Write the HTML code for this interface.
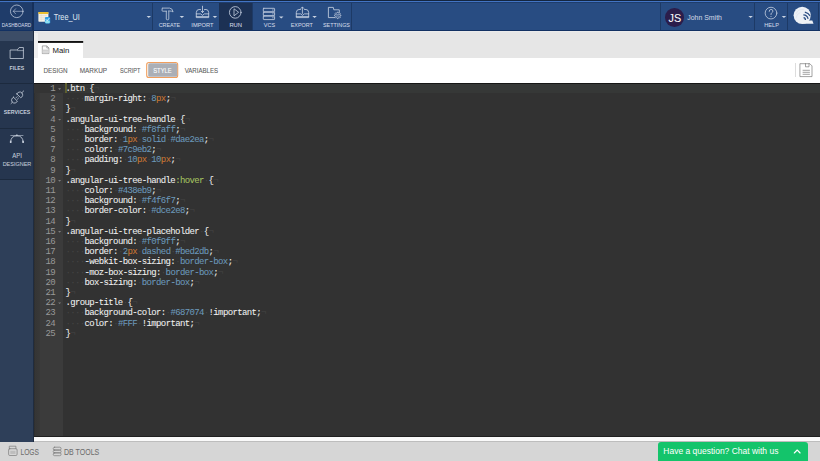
<!DOCTYPE html>
<html><head><meta charset="utf-8">
<style>
*{box-sizing:border-box}
html,body{margin:0;padding:0}
body{width:820px;height:461px;overflow:hidden;position:relative;background:#d6d6d6;font-family:"Liberation Sans",sans-serif}
.a{position:absolute}
.gn{position:absolute;right:0;width:30px;text-align:right;white-space:pre;color:#999999;font-family:"Liberation Mono",monospace;font-size:9px;line-height:10.25px;height:10.25px;letter-spacing:-0.63px}
.ln{position:absolute;left:0;white-space:pre;font-family:"Liberation Mono",monospace;font-size:9px;line-height:10.25px;height:10.25px;color:#e6e6e6;letter-spacing:-0.63px;-webkit-text-stroke:0.05px}
.w{color:#f0f0f0}
.n{color:#6c99bb}
.u{color:#cc7833}
.h{color:#6c99bb}
.p{color:#a5c261}
.iv{color:#454545}
</style></head>
<body>
<!-- TOP BAR backgrounds -->
<div class="a" style="left:0;top:0;width:820px;height:30.6px;background:#284c82"></div>
<div class="a" style="left:0;top:0;width:32.3px;height:30.6px;background:#1f3c6a"></div>
<div class="a" style="left:218.8px;top:0;width:33.2px;height:30.6px;background:#1c3154"></div>
<div class="a" style="left:0;top:0;width:820px;height:0.8px;background:#142640"></div>
<div class="a" style="left:0;top:0.8px;width:820px;height:1.4px;background:#4274c4"></div>
<div class="a" style="left:0;top:2.2px;width:820px;height:0.6px;background:#1f3d6b"></div>
<div class="a" style="left:0;top:29.5px;width:820px;height:1.1px;background:#123163"></div>
<div class="a" style="left:32.3px;top:1.9px;width:1.3px;height:28.7px;background:#16305a"></div>
<div class="a" style="left:152.1px;top:2.6px;width:0.9px;height:27px;background:#1d3a66"></div>
<div class="a" style="left:251.7px;top:2.6px;width:0.9px;height:27px;background:#1d3a66"></div>
<div class="a" style="left:350.7px;top:2.6px;width:0.9px;height:27px;background:#1d3a66"></div>
<div class="a" style="left:660.1px;top:2.6px;width:0.9px;height:27px;background:#1d3a66"></div>
<div class="a" style="left:754px;top:2.6px;width:0.9px;height:27px;background:#1d3a66"></div>
<div class="a" style="left:787px;top:2.6px;width:0.9px;height:27px;background:#1d3a66"></div>
<div class="a" style="left:818px;top:2.6px;width:0.9px;height:27px;background:#1d3a66"></div>
<div class="a" style="left:665.3px;top:8.1px;width:18.6px;height:18.6px;border-radius:50%;background:#2b1d4b"></div>

<!-- SIDEBAR -->
<div class="a" style="left:0;top:30.6px;width:33.6px;height:411.2px;background:#2e3f59"></div>
<div class="a" style="left:0;top:30.6px;width:32.8px;height:10.4px;background:#3c4d67"></div>
<div class="a" style="left:0;top:41px;width:32.8px;height:138.5px;background:#26364f"></div>
<div class="a" style="left:0;top:83.4px;width:32.8px;height:0.9px;background:#1c2a3e"></div>
<div class="a" style="left:0;top:127.8px;width:32.8px;height:0.9px;background:#1c2a3e"></div>
<div class="a" style="left:0;top:179px;width:32.8px;height:0.9px;background:#1c2a3e"></div>
<div class="a" style="left:32.8px;top:30.6px;width:0.8px;height:411.2px;background:#1f2c40"></div>

<!-- TAB BAR -->
<div class="a" style="left:33.6px;top:30.6px;width:786.4px;height:27px;background:#e6e6e6"></div>
<div class="a" style="left:33.6px;top:30.6px;width:786.4px;height:1.8px;background:#ebebeb"></div>
<div class="a" style="left:33.6px;top:32.6px;width:4.4px;height:25px;background:#efefef"></div>
<div class="a" style="left:38px;top:41px;width:45.2px;height:16.6px;background:#fff"></div>
<svg class="a" style="left:0;top:0" width="820" height="461" viewBox="0 0 820 461"><rect x="38" y="41" width="45.2" height="1.9" fill="#111"/></svg>

<!-- TOOLBAR -->
<div class="a" style="left:33.6px;top:57.6px;width:786.4px;height:25.1px;background:#fff"></div>
<svg class="a" style="left:0;top:0" width="820" height="461" viewBox="0 0 820 461">
 <rect x="146.7" y="62.5" width="31" height="15" rx="2.3" fill="#ffffff" stroke="#f09e5c" stroke-width="1.1"/>
 <rect x="148.2" y="63.2" width="29" height="13.6" rx="1.5" fill="#abafb6"/>
</svg>
<div class="a" style="left:795.2px;top:63.2px;width:0.7px;height:14px;background:#dddddd"></div>

<!-- CODE -->
<div class="a" style="left:33.6px;top:82.7px;width:786.4px;height:354px;background:#323232;overflow:hidden">
  <div class="a" style="left:0;top:0;width:29.7px;height:354px;background:#3b3b3b"></div>
  <div class="a" style="left:0;top:0;width:6px;height:354px;background:linear-gradient(90deg,#2c2c2c 0,#353535 1.2px,#383838 6px)"></div>
  <div class="a" style="left:0;top:0.3px;width:29.7px;height:10.2px;background:#343434"></div>
  <div class="a" style="left:29.7px;top:0.3px;width:760px;height:10.2px;background:#363837"></div>
  <div class="a" style="left:0;top:0;width:790px;height:1.4px;background:#161616"></div>
  <div class="a" style="left:31.7px;top:0.5px;width:1.5px;height:9.8px;background:#5f5f2f"></div>
  <div class="a" style="left:-8.5px;top:1.4px;width:30px;height:354px">
<div class="gn" style="top:0.00px">1</div>
<div class="gn" style="top:10.20px">2</div>
<div class="gn" style="top:20.40px">3</div>
<div class="gn" style="top:30.60px">4</div>
<div class="gn" style="top:40.80px">5</div>
<div class="gn" style="top:51.00px">6</div>
<div class="gn" style="top:61.20px">7</div>
<div class="gn" style="top:71.40px">8</div>
<div class="gn" style="top:81.60px">9</div>
<div class="gn" style="top:91.80px">10</div>
<div class="gn" style="top:102.00px">11</div>
<div class="gn" style="top:112.20px">12</div>
<div class="gn" style="top:122.40px">13</div>
<div class="gn" style="top:132.60px">14</div>
<div class="gn" style="top:142.80px">15</div>
<div class="gn" style="top:153.00px">16</div>
<div class="gn" style="top:163.20px">17</div>
<div class="gn" style="top:173.40px">18</div>
<div class="gn" style="top:183.60px">19</div>
<div class="gn" style="top:193.80px">20</div>
<div class="gn" style="top:204.00px">21</div>
<div class="gn" style="top:214.20px">22</div>
<div class="gn" style="top:224.40px">23</div>
<div class="gn" style="top:234.60px">24</div>
<div class="gn" style="top:244.80px">25</div>
<svg class="a" style="left:8.5px;top:0" width="40" height="300" fill="#7d7d7d"><path d="M24.1 4.30 h3 l-1.5 1.6 Z"/><path d="M24.1 34.90 h3 l-1.5 1.6 Z"/><path d="M24.1 96.10 h3 l-1.5 1.6 Z"/><path d="M24.1 147.10 h3 l-1.5 1.6 Z"/><path d="M24.1 218.50 h3 l-1.5 1.6 Z"/></svg>
  </div>
  <div class="a" style="left:31.8px;top:1.4px">
<div class="ln" style="top:0.00px"><span class="w">.btn</span><span class="iv">·</span><span class="w">{</span><span class="iv">¬</span></div>
<div class="ln" style="top:10.20px"><span class="iv">····</span><span class="w">margin-right:</span><span class="iv">·</span><span class="n">8</span><span class="u">px</span><span class="w">;</span><span class="iv">¬</span></div>
<div class="ln" style="top:20.40px"><span class="w">}</span><span class="iv">¬</span></div>
<div class="ln" style="top:30.60px"><span class="w">.angular-ui-tree-handle</span><span class="iv">·</span><span class="w">{</span><span class="iv">¬</span></div>
<div class="ln" style="top:40.80px"><span class="iv">····</span><span class="w">background:</span><span class="iv">·</span><span class="h">#f8faff</span><span class="w">;</span><span class="iv">¬</span></div>
<div class="ln" style="top:51.00px"><span class="iv">····</span><span class="w">border:</span><span class="iv">·</span><span class="n">1</span><span class="u">px</span><span class="iv">·</span><span class="h">solid</span><span class="iv">·</span><span class="h">#dae2ea</span><span class="w">;</span><span class="iv">¬</span></div>
<div class="ln" style="top:61.20px"><span class="iv">····</span><span class="w">color:</span><span class="iv">·</span><span class="h">#7c9eb2</span><span class="w">;</span><span class="iv">¬</span></div>
<div class="ln" style="top:71.40px"><span class="iv">····</span><span class="w">padding:</span><span class="iv">·</span><span class="n">10</span><span class="u">px</span><span class="iv">·</span><span class="n">10</span><span class="u">px</span><span class="w">;</span><span class="iv">¬</span></div>
<div class="ln" style="top:81.60px"><span class="w">}</span><span class="iv">¬</span></div>
<div class="ln" style="top:91.80px"><span class="w">.angular-ui-tree-handle</span><span class="p">:hover</span><span class="iv">·</span><span class="w">{</span><span class="iv">¬</span></div>
<div class="ln" style="top:102.00px"><span class="iv">····</span><span class="w">color:</span><span class="iv">·</span><span class="h">#438eb9</span><span class="w">;</span><span class="iv">¬</span></div>
<div class="ln" style="top:112.20px"><span class="iv">····</span><span class="w">background:</span><span class="iv">·</span><span class="h">#f4f6f7</span><span class="w">;</span><span class="iv">¬</span></div>
<div class="ln" style="top:122.40px"><span class="iv">····</span><span class="w">border-color:</span><span class="iv">·</span><span class="h">#dce2e8</span><span class="w">;</span><span class="iv">¬</span></div>
<div class="ln" style="top:132.60px"><span class="w">}</span><span class="iv">¬</span></div>
<div class="ln" style="top:142.80px"><span class="w">.angular-ui-tree-placeholder</span><span class="iv">·</span><span class="w">{</span><span class="iv">¬</span></div>
<div class="ln" style="top:153.00px"><span class="iv">····</span><span class="w">background:</span><span class="iv">·</span><span class="h">#f0f9ff</span><span class="w">;</span><span class="iv">¬</span></div>
<div class="ln" style="top:163.20px"><span class="iv">····</span><span class="w">border:</span><span class="iv">·</span><span class="n">2</span><span class="u">px</span><span class="iv">·</span><span class="h">dashed</span><span class="iv">·</span><span class="h">#bed2db</span><span class="w">;</span><span class="iv">¬</span></div>
<div class="ln" style="top:173.40px"><span class="iv">····</span><span class="w">-webkit-box-sizing:</span><span class="iv">·</span><span class="h">border-box</span><span class="w">;</span><span class="iv">¬</span></div>
<div class="ln" style="top:183.60px"><span class="iv">····</span><span class="w">-moz-box-sizing:</span><span class="iv">·</span><span class="h">border-box</span><span class="w">;</span><span class="iv">¬</span></div>
<div class="ln" style="top:193.80px"><span class="iv">····</span><span class="w">box-sizing:</span><span class="iv">·</span><span class="h">border-box</span><span class="w">;</span><span class="iv">¬</span></div>
<div class="ln" style="top:204.00px"><span class="w">}</span><span class="iv">¬</span></div>
<div class="ln" style="top:214.20px"><span class="w">.group-title</span><span class="iv">·</span><span class="w">{</span><span class="iv">¬</span></div>
<div class="ln" style="top:224.40px"><span class="iv">····</span><span class="w">background-color:</span><span class="iv">·</span><span class="h">#687074</span><span class="iv">·</span><span class="w">!important;</span><span class="iv">¬</span></div>
<div class="ln" style="top:234.60px"><span class="iv">····</span><span class="w">color:</span><span class="iv">·</span><span class="h">#FFF</span><span class="iv">·</span><span class="w">!important;</span><span class="iv">¬</span></div>
<div class="ln" style="top:244.80px"><span class="w">}</span><span class="iv">¬</span></div>
  </div>
</div>
<div class="a" style="left:33.6px;top:436.7px;width:786.4px;height:5.2px;background:#fafafa"></div>
<div class="a" style="left:33.6px;top:441.1px;width:786.4px;height:0.9px;background:#bdbdbd"></div>
<div class="a" style="left:33.6px;top:436.3px;width:786.4px;height:0.7px;background:#202020"></div>

<!-- STATUS -->
<div class="a" style="left:0;top:442px;width:820px;height:19px;background:#d6d6d6"></div>
<div class="a" style="left:657.9px;top:441.9px;width:149.9px;height:19.1px;background:#14c46b;border-radius:3px 3px 0 0"></div>

<!-- ICONS (page coordinates) -->
<svg class="a" style="left:0;top:0" width="820" height="461" viewBox="0 0 820 461" fill="none" stroke-linecap="round" stroke-linejoin="round">
 <g stroke="#c4cfe0" stroke-width="0.75">
  <!-- dashboard -->
  <circle cx="16.75" cy="11.3" r="6.3"/>
  <path d="M13.3 11.3 H22.6 M15.6 8.8 L13.3 11.3 L15.6 13.8" stroke-width="0.6"/>
  <!-- create hammer -->
  <path d="M162.6 8.1 H169.6 Q172.6 8.4 173.1 11.9 Q171.6 10.9 169.4 11 H168.8 M166.3 11.2 H162.6 Q162.1 11.2 162.1 10.7 V8.6 Q162.1 8.1 162.6 8.1" stroke-width="0.8"/>
  <path d="M166.3 11.2 V19.1 Q166.3 19.8 167.55 19.8 Q168.8 19.8 168.8 19.1 V11" stroke-width="0.8"/>
  <!-- import tray -->
  <path d="M200.5 9.5 H199 Q196.5 9.5 196.3 12.5 V17.6 H208.7 V12.5 Q208.5 9.5 206 9.5 H204.5" stroke-width="0.85"/>
  <path d="M196.3 13.9 H200.7 L202.5 15.4 L204.3 13.9 H208.7 M196.3 16.6 H208.7" stroke-width="0.85"/>
  <path d="M202.5 6.2 V12.6 M201.1 11.1 L202.5 12.6 L203.9 11.1" stroke-width="0.85"/>
  <!-- run -->
  <circle cx="235.25" cy="12.4" r="5.8" stroke-width="0.85"/>
  <path d="M234 9.2 V15.8 L238.3 12.5 Z" stroke-width="0.8"/>
  <!-- vcs -->
  <rect x="263.3" y="8.3" width="11.3" height="3.5" rx="0.5" stroke-width="0.85"/>
  <rect x="263.3" y="12.2" width="11.3" height="3.5" rx="0.5" stroke-width="0.85"/>
  <rect x="263.3" y="16.1" width="11.3" height="3.5" rx="0.5" stroke-width="0.85"/>
  <path d="M272.6 10 h0.6 M272.6 13.9 h0.6 M272.6 17.8 h0.6" stroke-width="0.8"/>
  <!-- export tray -->
  <path d="M300.5 9.5 H299 Q296.5 9.5 296.3 12.5 V17.6 H308.7 V12.5 Q308.5 9.5 306 9.5 H304.5" stroke-width="0.85"/>
  <path d="M296.3 13.9 H300.7 L302.5 15.4 L304.3 13.9 H308.7 M296.3 16.6 H308.7" stroke-width="0.85"/>
  <path d="M302.4 7.2 V13.5 M301 8.4 L302.4 7 L303.8 8.4" stroke-width="0.85"/>
  <!-- settings -->
  <path d="M334.6 17.6 H328.4 V7.4 H333.3 L333.8 9.8 H339.3 V12.3" stroke-width="0.85"/>
  <path d="M340.09 14.87 L340.97 14.97 L340.97 15.83 L340.09 15.93 L339.76 16.72 L340.32 17.41 L339.71 18.02 L339.02 17.46 L338.23 17.79 L338.13 18.67 L337.27 18.67 L337.17 17.79 L336.38 17.46 L335.69 18.02 L335.08 17.41 L335.64 16.72 L335.31 15.93 L334.43 15.83 L334.43 14.97 L335.31 14.87 L335.64 14.08 L335.08 13.39 L335.69 12.78 L336.38 13.34 L337.17 13.01 L337.27 12.13 L338.13 12.13 L338.23 13.01 L339.02 13.34 L339.71 12.78 L340.32 13.39 L339.76 14.08 Z" fill="#284c82" stroke-width="0.7"/>
  <path d="M336.5 14.7 H338.9 M336.5 16.1 H338.9" stroke-width="0.6"/>
  <!-- help -->
  <circle cx="771" cy="13.1" r="5.85" stroke-width="0.8"/>
  <path d="M769.2 11.4 Q769.2 9.4 771 9.4 Q772.9 9.4 772.9 11.1 Q772.9 12.3 771.5 13 Q771 13.3 771 14.6" stroke-width="0.8"/>
 </g>
 <circle cx="771" cy="16.5" r="0.5" fill="#c4cfe0"/>
 <!-- carets -->
 <g fill="#c9d3e2">
  <path d="M146.6 15.9 H151 L148.8 18 Z"/>
  <path d="M179.6 15.9 H184.1 L181.85 18 Z"/>
  <path d="M212.7 15.9 H217.2 L214.95 18 Z"/>
  <path d="M279 16.4 H283.5 L281.25 18.5 Z"/>
  <path d="M312.3 16 H316.8 L314.55 18.1 Z"/>
  <path d="M748.4 15.9 H752.9 L750.65 18 Z"/>
  <path d="M781.7 15.9 H786.2 L783.95 18 Z"/>
 </g>
 <!-- project icon -->
 <rect x="38.4" y="12.1" width="10" height="9.6" rx="0.7" fill="#f6f3ea"/>
 <rect x="38.4" y="12.1" width="10" height="1.8" fill="#e9b81c"/>
 <path d="M40 15.3 H46.5 M40 17.2 H46 M40 19.1 H44" stroke="#d4cbb3" stroke-width="0.5"/>
 <path d="M41.2 14.5 V20.5" stroke="#ddd5c0" stroke-width="0.4"/>
 <rect x="44.9" y="16.9" width="5.3" height="6.6" rx="1.2" fill="#2f9fe6"/>
 <rect x="45.3" y="20.5" width="4.4" height="2.8" rx="0.8" fill="#8fe0ef"/>
 <path d="M46 19.5 L47.2 20.7 L49.2 18.3" stroke="#ffffff" stroke-width="0.8"/>
 <!-- logo -->
 <circle cx="802.2" cy="15.3" r="8.6" fill="#edf1f6"/>
 <path d="M802.2 20.5 H812.3 L813.5 23.7 H802.2 Z" fill="#edf1f6"/>
 <g stroke="#284c82" fill="none" stroke-linecap="butt">
<path d="M803.58 17.63 A2.2 2.2 0 0 1 805.39 19.99" stroke-width="1.3"/>
<path d="M803.37 14.80 A5.0 5.0 0 0 1 808.09 18.76" stroke-width="1.2"/>
<path d="M804.84 12.07 A7.9 7.9 0 0 1 810.18 16.09" stroke-width="1.2"/>
 </g>
 <path d="M796.2 13.5 A6.5 6.5 0 0 1 803.5 9.5 M796 17.8 A6.5 6.5 0 0 1 800 12.6" stroke="#d2d9e4" stroke-width="0.45" fill="none"/>
 <!-- sidebar icons -->
 <g stroke="#c5cedb" stroke-width="0.8">
  <path d="M10.5 50 H17.2 L19.2 47.5 H23.4 V58.5 H10.5 Z"/>
  <path d="M17.4 50.6 H23.4" stroke-width="0.6"/>
  <!-- plug -->
  <path d="M16.87 93.91 L20.69 97.73 A3.0 3.0 0 1 0 16.87 93.91 Z"/>
  <path d="M13.51 97.27 L17.33 101.09 A3.0 3.0 0 1 1 13.51 97.27 Z"/>
  <path d="M21.82 92.78 L23.66 90.94 M12.38 102.22 L11.04 103.56"/>
  <path d="M15.9 97.9 L17.2 96.6 M17.3 99.3 L18.6 98" stroke-width="0.7"/>
  <!-- api -->
  <path d="M10.6 141.8 Q11 135.8 16.9 135.8 Q22.8 135.8 23.1 141.8" stroke-width="0.85"/>
  <path d="M10.8 135.5 H23 " stroke-width="0.6"/>
 </g>
 <g fill="#c5cedb">
  <path d="M9.9 140.8 h1.6 v2.2 h-1.6 Z M22.3 140.8 h1.6 v2.2 h-1.6 Z"/>
  <path d="M16.9 134.2 L18 135.3 L16.9 136.4 L15.8 135.3 Z"/>
 </g>

 <!-- tab doc icon -->
 <g stroke-linejoin="miter" stroke-linecap="butt">
 <path d="M42.3 45.9 H46.8 L48.9 48 V53.6 H42.3 Z" fill="#fafafa" stroke="#5e5e5e" stroke-width="0.5"/>
 <rect x="42.6" y="49.6" width="6" height="3.7" fill="#d9d9d9"/>
 <path d="M42.6 50.3 H48.6" stroke="#c4c4c4" stroke-width="0.5"/>
 <path d="M46.8 45.9 V48 H48.9" stroke="#5e5e5e" stroke-width="0.45" fill="none"/>
 </g>
 <!-- toolbar save doc icon -->
 <g stroke="#707070" stroke-width="0.65" fill="none">
  <path d="M800.3 63.7 H809.8 L812 65.9 V76.6 H800.3 Z"/>
  <path d="M805.5 63.7 V66.8 H809 V63.7"/>
  <path d="M803 70.3 H809.5 M803 72.3 H809.5 M803 74.3 H809.5"/>
 </g>
 <!-- logs icon -->
 <g stroke="#7a7a7a" stroke-width="0.7" fill="none">
  <path d="M9.3 448.7 V446.2 H15.9 V448.7"/>
  <rect x="8.6" y="448.7" width="8.5" height="6.8" rx="1.2"/>
 </g>
 <rect x="10.3" y="450.8" width="5.2" height="3.1" fill="#bdbdbd"/>
 <!-- db icon -->
 <g stroke="#7a7a7a" stroke-width="0.7" fill="none">
  <rect x="53.2" y="447.2" width="7.9" height="2.9" rx="1.45"/>
  <rect x="53.2" y="450" width="7.9" height="2.9" rx="1.45"/>
  <rect x="53.2" y="452.8" width="7.9" height="2.9" rx="1.45"/>
 </g>
 <!-- chat caret -->
 <path d="M794.3 453 L797.2 450 L800.1 453" stroke="#ffffff" stroke-width="1.1" fill="none"/>
</svg>
<svg class="a" style="left:0;top:0;pointer-events:none" width="820" height="461" viewBox="0 0 820 461">
<text x="1.72" y="26.70" font-family="Liberation Sans" font-size="5.09" fill="#d3dbe7" stroke="#d3dbe7" stroke-width="0.04" textLength="29.40" lengthAdjust="spacingAndGlyphs" xml:space="preserve">DASHBOARD</text>
<text x="158.73" y="26.80" font-family="Liberation Sans" font-size="5.52" fill="#d3dbe7" stroke="#d3dbe7" stroke-width="0.04" textLength="21.39" lengthAdjust="spacingAndGlyphs" xml:space="preserve">CREATE</text>
<text x="191.37" y="26.80" font-family="Liberation Sans" font-size="5.52" fill="#d3dbe7" stroke="#d3dbe7" stroke-width="0.04" textLength="22.16" lengthAdjust="spacingAndGlyphs" xml:space="preserve">IMPORT</text>
<text x="229.42" y="26.80" font-family="Liberation Sans" font-size="5.52" fill="#d3dbe7" stroke="#d3dbe7" stroke-width="0.04" textLength="12.66" lengthAdjust="spacingAndGlyphs" xml:space="preserve">RUN</text>
<text x="263.77" y="26.80" font-family="Liberation Sans" font-size="5.52" fill="#d3dbe7" stroke="#d3dbe7" stroke-width="0.04" textLength="11.27" lengthAdjust="spacingAndGlyphs" xml:space="preserve">VCS</text>
<text x="290.75" y="26.80" font-family="Liberation Sans" font-size="5.52" fill="#d3dbe7" stroke="#d3dbe7" stroke-width="0.04" textLength="22.18" lengthAdjust="spacingAndGlyphs" xml:space="preserve">EXPORT</text>
<text x="322.96" y="26.80" font-family="Liberation Sans" font-size="5.52" fill="#d3dbe7" stroke="#d3dbe7" stroke-width="0.04" textLength="26.99" lengthAdjust="spacingAndGlyphs" xml:space="preserve">SETTINGS</text>
<text x="764.23" y="26.80" font-family="Liberation Sans" font-size="5.52" fill="#d3dbe7" stroke="#d3dbe7" stroke-width="0.04" textLength="14.76" lengthAdjust="spacingAndGlyphs" xml:space="preserve">HELP</text>
<text x="53.74" y="19.75" font-family="Liberation Sans" font-size="8.28" fill="#dde4ee" stroke="#dde4ee" stroke-width="0.05" textLength="26.04" lengthAdjust="spacingAndGlyphs" xml:space="preserve">Tree_UI</text>
<text x="668.54" y="21.60" font-family="Liberation Sans" font-size="10.76" fill="#ffffff" stroke="#ffffff" stroke-width="0.05" textLength="12.64" lengthAdjust="spacingAndGlyphs" xml:space="preserve">JS</text>
<text x="687.30" y="19.60" font-family="Liberation Sans" font-size="6.83" fill="#d3dbe7" textLength="34.64" lengthAdjust="spacingAndGlyphs" xml:space="preserve">John Smith</text>
<text x="9.60" y="69.90" font-family="Liberation Sans" font-size="5.81" font-weight="bold" fill="#c5cedb" textLength="14.70" lengthAdjust="spacingAndGlyphs" xml:space="preserve">FILES</text>
<text x="3.74" y="113.90" font-family="Liberation Sans" font-size="5.81" font-weight="bold" fill="#c5cedb" textLength="26.56" lengthAdjust="spacingAndGlyphs" xml:space="preserve">SERVICES</text>
<text x="12.19" y="158.00" font-family="Liberation Sans" font-size="6.54" fill="#c5cedb" stroke="#c5cedb" stroke-width="0.04" textLength="9.67" lengthAdjust="spacingAndGlyphs" xml:space="preserve">API</text>
<text x="2.65" y="165.80" font-family="Liberation Sans" font-size="6.10" fill="#c5cedb" stroke="#c5cedb" stroke-width="0.04" textLength="28.62" lengthAdjust="spacingAndGlyphs" xml:space="preserve">DESIGNER</text>
<text x="52.46" y="52.60" font-family="Liberation Sans" font-size="7.41" fill="#262626" stroke="#262626" stroke-width="0.05" textLength="16.83" lengthAdjust="spacingAndGlyphs" xml:space="preserve">Main</text>
<text x="43.48" y="72.80" font-family="Liberation Sans" font-size="6.98" fill="#5c5c5c" stroke="#5c5c5c" stroke-width="0.08" textLength="24.13" lengthAdjust="spacingAndGlyphs" xml:space="preserve">DESIGN</text>
<text x="79.67" y="72.80" font-family="Liberation Sans" font-size="6.98" fill="#5c5c5c" stroke="#5c5c5c" stroke-width="0.08" textLength="27.46" lengthAdjust="spacingAndGlyphs" xml:space="preserve">MARKUP</text>
<text x="120.05" y="72.80" font-family="Liberation Sans" font-size="6.98" fill="#5c5c5c" stroke="#5c5c5c" stroke-width="0.08" textLength="20.39" lengthAdjust="spacingAndGlyphs" xml:space="preserve">SCRIPT</text>
<text x="153.24" y="72.80" font-family="Liberation Sans" font-size="6.98" fill="#ffffff" stroke="#ffffff" stroke-width="0.08" textLength="18.41" lengthAdjust="spacingAndGlyphs" xml:space="preserve">STYLE</text>
<text x="184.67" y="72.80" font-family="Liberation Sans" font-size="6.98" fill="#5c5c5c" stroke="#5c5c5c" stroke-width="0.08" textLength="33.50" lengthAdjust="spacingAndGlyphs" xml:space="preserve">VARIABLES</text>
<text x="20.45" y="454.60" font-family="Liberation Sans" font-size="8.28" fill="#6e6e6e" stroke="#6e6e6e" stroke-width="0.05" textLength="18.54" lengthAdjust="spacingAndGlyphs" xml:space="preserve">LOGS</text>
<text x="64.02" y="454.60" font-family="Liberation Sans" font-size="8.28" fill="#6e6e6e" stroke="#6e6e6e" stroke-width="0.05" textLength="35.20" lengthAdjust="spacingAndGlyphs" xml:space="preserve">DB TOOLS</text>
<text x="663.30" y="454.40" font-family="Liberation Sans" font-size="8.87" fill="#ffffff" textLength="115.09" lengthAdjust="spacingAndGlyphs" xml:space="preserve">Have a question? Chat with us</text>
</svg>
</body></html>
